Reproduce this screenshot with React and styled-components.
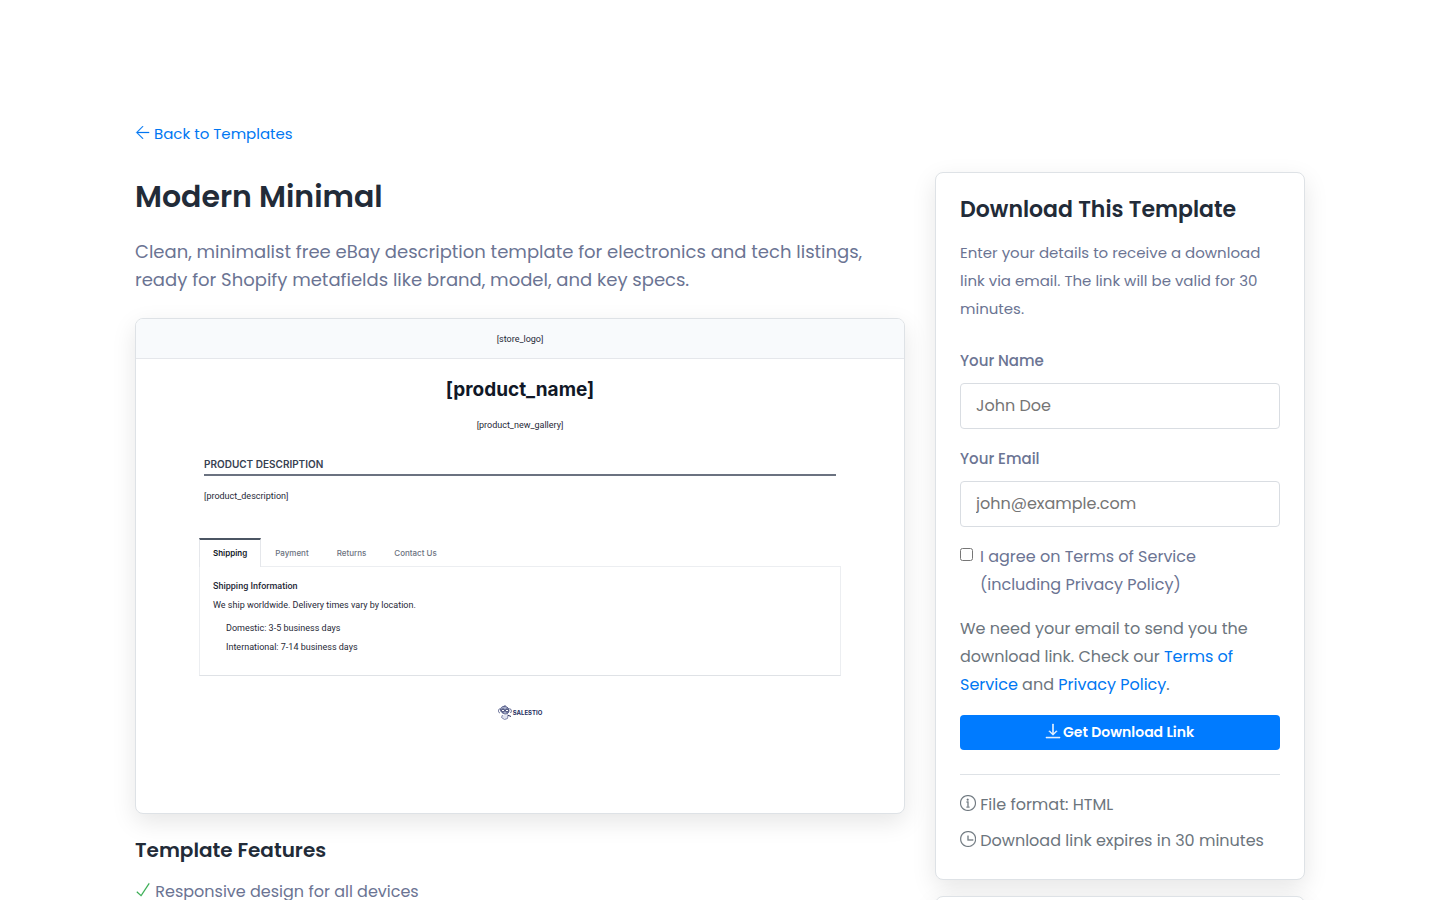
import styled, { createGlobalStyle, css } from 'styled-components';

import React from 'react';
import { TfiArrowLeft, TfiCheck, TfiDownload, TfiInfoAlt, TfiTime } from 'react-icons/tfi';

const features = ['Responsive design for all devices'];

const tabs = ['Shipping', 'Payment', 'Returns', 'Contact Us'];

const SalestioLogo = () => (
  <svg width="14" height="15" viewBox="0 0 28 30" fill="none" aria-hidden="true">
    <path d="M5 8c2-5 6-6 10-5s7 4 7 8-3 7-7 7-11-4-10-10z" fill="#aab0cb" stroke="#59618c" strokeWidth="2" />
    <path d="M4 7C0 9 0 15 4 16M23 7c4 1 5 6 2 9M14 3V0" stroke="#59618c" strokeWidth="2" />
    <circle cx="10" cy="11" r="3" fill="#fff" stroke="#252e60" strokeWidth="2" />
    <circle cx="18" cy="11" r="3" fill="#fff" stroke="#252e60" strokeWidth="2" />
    <path d="M9 20l-2 5 6 4 6-2 1-6" fill="#dfe2ee" stroke="#8188aa" strokeWidth="2" />
    <path d="M19 20l7 3" stroke="#252e60" strokeWidth="2" />
  </svg>
);

const TemplatePreview = () => (
  <Preview>
    <PreviewHeader>[store_logo]</PreviewHeader>
    <PreviewName>[product_name]</PreviewName>
    <PreviewGallery>[product_new_gallery]</PreviewGallery>
    <PreviewBody>
      <PreviewSection>
        <PreviewHeading>Product Description</PreviewHeading>
        <PreviewText>[product_description]</PreviewText>
      </PreviewSection>
      <TabList>
        {tabs.map((tab, i) => (
          <Tab key={tab} type="button" $active={i === 0}>{tab}</Tab>
        ))}
      </TabList>
      <TabPanel>
        <PanelTitle>Shipping Information</PanelTitle>
        <PreviewText>We ship worldwide. Delivery times vary by location.</PreviewText>
        <PanelList>
          <li>Domestic: 3-5 business days</li>
          <li>International: 7-14 business days</li>
        </PanelList>
      </TabPanel>
    </PreviewBody>
    <PreviewBrand>
      <SalestioLogo />
      <span>SALESTIO</span>
    </PreviewBrand>
  </Preview>
);

const DownloadForm = () => (
  <Card>
    <CardTitle>Download This Template</CardTitle>
    <CardIntro>
      Enter your details to receive a download link via email. The link will be valid for 30 minutes.
    </CardIntro>
    <form onSubmit={(e) => e.preventDefault()}>
      <Field>
        <Label htmlFor="name">Your Name</Label>
        <Input id="name" type="text" placeholder="John Doe" />
      </Field>
      <Field>
        <Label htmlFor="email">Your Email</Label>
        <Input id="email" type="email" placeholder="john@example.com" />
      </Field>
      <Agree>
        <Checkbox id="agree" type="checkbox" />
        <label htmlFor="agree">
          I agree on Terms of Service
          <br />
          (including Privacy Policy)
        </label>
      </Agree>
      <Note>
        We need your email to send you the download link. Check our <Link href="#terms">Terms of Service</Link> and{' '}
        <Link href="#privacy">Privacy Policy</Link>.
      </Note>
      <SubmitButton type="submit">
        <TfiDownload /> Get Download Link
      </SubmitButton>
    </form>
    <InfoList>
      <li><TfiInfoAlt /> File format: HTML</li>
      <li><TfiTime /> Download link expires in 30 minutes</li>
    </InfoList>
  </Card>
);

const App = () => (
  <>
    <GlobalStyle />
    <Container>
      <BackLink href="#templates">
        <TfiArrowLeft /> Back to Templates
      </BackLink>
      <Columns>
        <main>
          <Title>Modern Minimal</Title>
          <Lead>
            Clean, minimalist free eBay description template for electronics and tech listings, ready for Shopify
            metafields like brand, model, and key specs.
          </Lead>
          <TemplatePreview />
          <FeaturesTitle>Template Features</FeaturesTitle>
          <FeatureList>
            {features.map((feature) => (
              <li key={feature}><TfiCheck /> {feature}</li>
            ))}
          </FeatureList>
        </main>
        <Sidebar>
          <DownloadForm />
          <Card />
        </Sidebar>
      </Columns>
    </Container>
  </>
);

export default App;


const GlobalStyle = createGlobalStyle`
  *, *::before, *::after {
    box-sizing: border-box;
  }
  body {
    margin: 0;
    background: #fff;
    color: #6b7493;
    font-family: Poppins, Inter, "Open Sans", sans-serif;
    font-size: 16px;
    line-height: 28px;
  }
  h1, h2, h3, h4, p, ul {
    margin: 0;
    padding: 0;
  }
  ul {
    list-style: none;
  }
`;

const raised = css`
  border: 1px solid #dee2e6;
  border-radius: 8px;
  background: #fff;
  box-shadow: 0 8px 24px rgba(0, 0, 0, 0.1);
`;

// themify glyphs sit on the text baseline
const withIcon = css`
  svg {
    vertical-align: -1px;
    stroke: currentColor;
    stroke-width: 0.3;
  }
`;

const Container = styled.div`
  max-width: 1200px;
  margin: 0 auto;
  padding: 120px 15px 0;
`;

const Link = styled.a`
  color: #0077f2;
  text-decoration: none;
`;

const BackLink = styled(Link)`
  ${withIcon}
  display: inline-block;
  margin-bottom: 24px;
  font-size: 15px;
`;

const Columns = styled.div`
  display: grid;
  grid-template-columns: minmax(0, 770fr) minmax(0, 370fr);
  gap: 30px;
  align-items: start;
`;

const Title = styled.h1`
  margin-bottom: 16px;
  color: #222b38;
  font-size: 30px;
  font-weight: 600;
  line-height: 50px;
`;

const Lead = styled.p`
  margin-bottom: 24px;
  font-size: 18px;
`;

const Preview = styled.div`
  ${raised}
  overflow: hidden;
  padding-bottom: 91px;
  color: #1f2937;
  font-family: Roboto, sans-serif;
  font-size: 9px;
  line-height: 18px;
`;

const PreviewHeader = styled.div`
  padding: 11px 0 10px;
  border-bottom: 1px solid #e5e7eb;
  background: #f8fafc;
  text-align: center;
`;

const PreviewName = styled.h2`
  padding-top: 17px;
  color: #111827;
  font-family: Inter, sans-serif;
  font-size: 19px;
  font-weight: 700;
  line-height: 28px;
  text-align: center;
`;

const PreviewGallery = styled.p`
  padding: 12px 0 20px;
  text-align: center;
`;

const PreviewBody = styled.div`
  margin: 0 63px;
`;

const PreviewSection = styled.div`
  padding: 0 5px 33px;
`;

const PreviewHeading = styled.h3`
  margin-bottom: 11px;
  border-bottom: 2px solid #6b7280;
  color: #374151;
  font-family: Inter, sans-serif;
  font-size: 10px;
  font-weight: 600;
  line-height: 20px;
  text-transform: uppercase;
`;

const PreviewText = styled.p`
  color: #1f2937;
`;

const TabList = styled.div`
  display: flex;
`;

const Tab = styled.button`
  padding: 0 14px;
  border: 1px solid transparent;
  border-width: 2px 0 0;
  background: #fff;
  color: #6b7280;
  font-family: Inter, sans-serif;
  font-size: 8px;
  font-weight: 500;
  line-height: 26px;

  ${({ $active }) =>
    $active &&
    css`
      margin-bottom: -1px;
      border-width: 2px 1px 0;
      border-color: #4b5563 #e5e7eb;
      color: #111827;
      font-weight: 600;
      padding: 0 13px 1px;
    `}
`;

const TabPanel = styled.div`
  padding: 10px 13px 19px;
  border: 1px solid #eceef1;
  border-bottom-color: #dfe2e6;
`;

const PanelTitle = styled.h4`
  margin-bottom: 1px;
  font-size: 9px;
  font-weight: 500;
`;

const PanelList = styled.ul`
  padding: 5px 0 0 13px;

  li + li {
    margin-top: 1px;
  }
`;

const PreviewBrand = styled.div`
  display: flex;
  align-items: center;
  justify-content: center;
  gap: 1px;
  margin-top: 26px;
  color: #252e60;
  font-family: Inter, sans-serif;
  font-size: 6px;
  font-weight: 700;

  span {
    padding-top: 2px;
  }
`;

const FeaturesTitle = styled.h2`
  margin: 24px 0 16px;
  color: #222b38;
  font-size: 20px;
  font-weight: 600;
  line-height: 24px;
`;

const FeatureList = styled.ul`
  ${withIcon}

  svg {
    color: #28a745;
  }
`;

const Sidebar = styled.aside`
  display: grid;
  gap: 16px;
`;

const Card = styled.section`
  ${raised}
  padding: 24px;
`;

const CardTitle = styled.h2`
  margin-bottom: 16px;
  color: #222b38;
  font-size: 22px;
  font-weight: 600;
  line-height: 26px;
`;

const CardIntro = styled.p`
  margin-bottom: 24px;
  font-size: 15px;
`;

const Field = styled.div`
  margin-bottom: 16px;
`;

const Label = styled.label`
  display: block;
  margin-bottom: 8px;
  font-size: 15px;
  font-weight: 500;
`;

const Input = styled.input`
  display: block;
  width: 100%;
  height: 46px;
  padding: 0 15px 2px;
  border: 1px solid #d9dde2;
  border-radius: 4px;
  background: #fff;
  color: #495057;
  font-family: inherit;
  font-size: 16px;

  &::placeholder {
    color: #757575;
  }
`;

const Agree = styled.div`
  display: flex;
  align-items: flex-start;
  gap: 7px;
  margin-bottom: 16px;
`;

const Checkbox = styled.input`
  width: 13px;
  height: 13px;
  margin: 5px 0 0;
`;

const Note = styled.p`
  margin-bottom: 16px;
  color: #6c757d;
`;

const SubmitButton = styled.button`
  ${withIcon}
  display: block;
  width: 100%;
  height: 35px;
  border: 0;
  border-radius: 4px;
  background: #007bff;
  color: #fff;
  font-family: inherit;
  font-size: 14px;
  font-weight: 600;
  text-align: center;

  svg {
    stroke-width: 0.7;
    overflow: visible;
  }
`;

const InfoList = styled.ul`
  ${withIcon}
  display: grid;
  gap: 8px;
  margin-top: 24px;
  padding-top: 16px;
  border-top: 1px solid #dee2e6;
  color: #6c757d;
`;
